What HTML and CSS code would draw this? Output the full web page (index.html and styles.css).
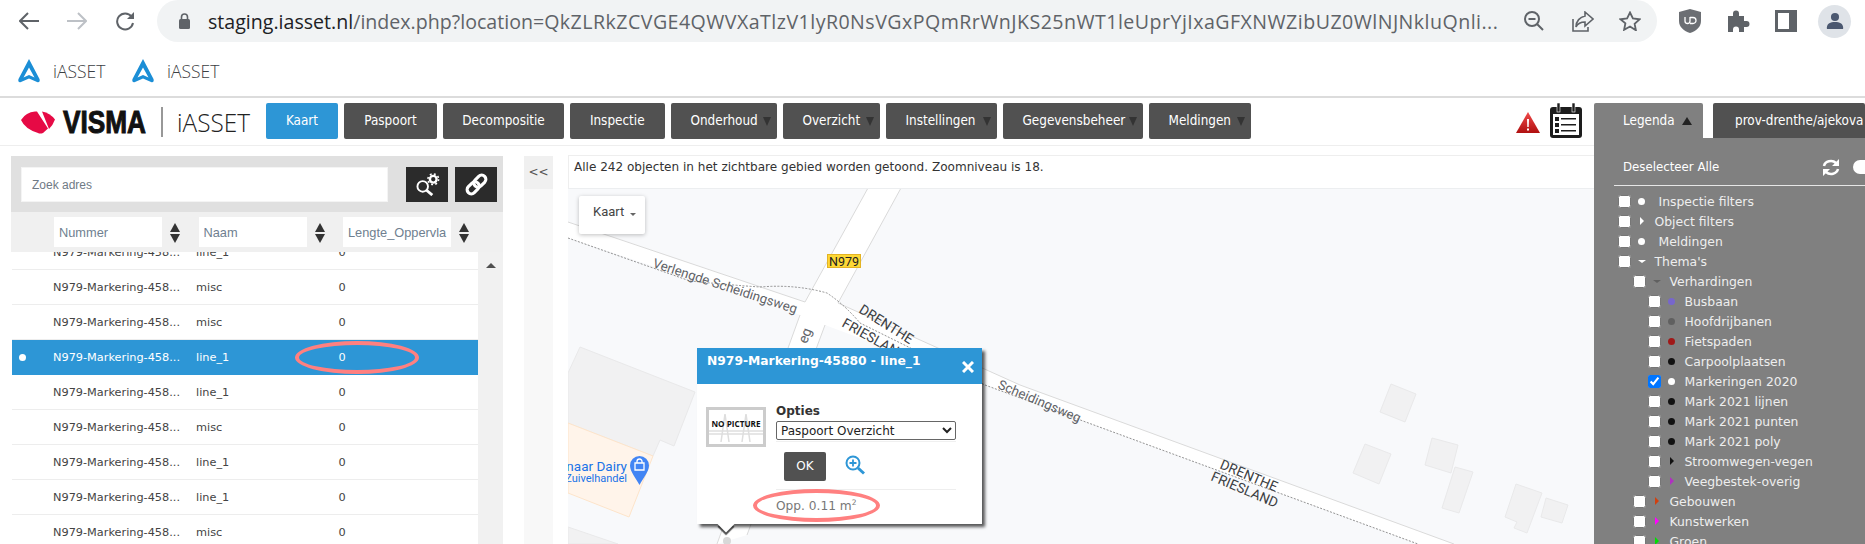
FILE: index.html
```html
<!DOCTYPE html>
<html lang="nl">
<head>
<meta charset="utf-8">
<title>iASSET</title>
<link rel="stylesheet" href="styles.css">
</head>
<body>
<div class="browser">
  <div class="toolbar">
    <svg class="tb-icon" viewBox="0 0 20 18"><path d="M9 1 1 9l8 8M1 9h19" fill="none" stroke="#5f6368" stroke-width="2"/></svg>
    <svg class="tb-icon" viewBox="0 0 20 18"><path d="m11 1 8 8-8 8M19 9H0" fill="none" stroke="#bdc1c6" stroke-width="2"/></svg>
    <svg class="tb-icon" viewBox="0 0 20 20"><path d="M16.5 5.5A8 8 0 1 0 18 12" fill="none" stroke="#5f6368" stroke-width="2"/><path d="M19 1v7h-7z" fill="#5f6368"/></svg>
    <div class="omnibox">
      <svg class="lock" viewBox="0 0 11 16"><path d="M2.5 6V4a3 3 0 0 1 6 0v2" fill="none" stroke="#5f6368" stroke-width="1.6"/><rect y="6" width="11" height="10" rx="1.5" fill="#5f6368"/></svg>
      <div class="url"><span class="host">staging.iasset.nl</span>/index.php?location=<span class="query">QkZLRkZCVGE4QWVXaTlzV1lyR0NsVGxPQmRrWnJKS25nWT1leUprYjIxaGFXNWZibUZ0WlNJNkluQnli...</span></div>
      <svg class="omni-zoom" viewBox="0 0 20 20"><circle cx="8" cy="8" r="7" fill="none" stroke="#5f6368" stroke-width="2"/><path d="M4.5 8h7M13 13l6 6" stroke="#5f6368" stroke-width="2"/></svg>
      <svg class="omni-share" viewBox="0 0 22 21"><path d="M1 8v12h15v-4" fill="none" stroke="#5f6368" stroke-width="1.6"/><path d="M13 1l8 7-8 7v-4C9 11 6 12 4 16c0-6 4-10 9-11z" fill="none" stroke="#5f6368" stroke-width="1.6"/></svg>
      <svg class="omni-star" viewBox="0 0 22 20"><path d="m11 1.500 2.900 6 6.600.8-4.900 4.500 1.300 6.500L11 15.500 5.100 18.800l1.300-6.500L1.500 8.300l6.600-.8z" fill="none" stroke="#5f6368" stroke-width="1.800"/></svg>
    </div>
    <svg class="ext ublock" viewBox="0 0 22 24"><path d="M11 0l11 3v9c0 6-5 10-11 12C5 22 0 18 0 12V3z" fill="#6b6e73"/><path d="M6 8v4a2.500 2.500 0 0 0 5 0V8M11 14.500h3a2.800 2.800 0 0 0 0-6h-3" fill="none" stroke="#fff" stroke-width="1.300"/></svg>
    <svg class="ext puzzle" viewBox="0 0 22 22"><path d="M0 6h5V3.500a3 3 0 0 1 6 0V6h5v5h2.500a3 3 0 0 1 0 6H16v5h-5v-2.500a3 3 0 0 0-6 0V22H0z" fill="#5f6368"/></svg>
    <svg class="ext panel-ic" viewBox="0 0 22 22"><rect x="1.500" y="1.500" width="19" height="19" fill="#fff" stroke="#5f6368" stroke-width="3"/><rect x="14" y="1" width="8" height="20" fill="#5f6368"/></svg>
    <div class="avatar"><svg viewBox="0 0 20 20" class="avatar-ic"><circle cx="10" cy="5.500" r="4.500" fill="#4b5870"/><path d="M1 19v-2c0-4 4-6 9-6s9 2 9 6v2z" fill="#4b5870"/></svg></div>
  </div>
  <div class="bookmarks">
    <div class="bookmark"><svg class="bm-ic" viewBox="0 0 22 24"><path d="M11 0l10.500 20q1 4-2.500 3L11 19.500 3 23q-3.500 1-2.500-3z" fill="#1b8ed6"/><path d="M11 8.500l5.500 10L11 16l-5.500 2.500z" fill="#fff"/></svg><span>iASSET</span></div>
    <div class="bookmark"><svg class="bm-ic" viewBox="0 0 22 24"><path d="M11 0l10.500 20q1 4-2.500 3L11 19.500 3 23q-3.500 1-2.500-3z" fill="#1b8ed6"/><path d="M11 8.500l5.500 10L11 16l-5.500 2.500z" fill="#fff"/></svg><span>iASSET</span></div>
  </div>
</div>

<div class="app">
  <div class="main">
    <header class="header">
      <svg class="logo" viewBox="0 0 235 32">
        <path d="M1 13Q6 5 15 4.500H17L28 21.500 23 26Q20 27 18 26 5 22 1 13z" fill="#e60a45"/>
        <path d="M22 4.500Q30 6 35 12.500 33 18 29 22z" fill="#e60a45"/>
        <text class="logo-visma" x="43" y="26" textLength="83" lengthAdjust="spacingAndGlyphs">VISMA</text>
        <rect x="141.500" y="0" width="1" height="30" fill="#333"/>
        <text class="logo-iasset" x="157" y="25" textLength="73" lengthAdjust="spacingAndGlyphs">iASSET</text>
      </svg>
      <nav class="nav">
        <div class="nav-btn active">Kaart</div>
        <div class="nav-btn">Paspoort</div>
        <div class="nav-btn">Decompositie</div>
        <div class="nav-btn">Inspectie</div>
        <div class="nav-btn drop">Onderhoud</div>
        <div class="nav-btn drop">Overzicht</div>
        <div class="nav-btn drop">Instellingen</div>
        <div class="nav-btn drop">Gegevensbeheer</div>
        <div class="nav-btn drop">Meldingen</div>
      </nav>
      <svg class="alert" viewBox="0 0 24 21"><defs><linearGradient id="ag" x1="0" y1="0" x2="0" y2="1"><stop offset="0" stop-color="#f04a4a"/><stop offset="1" stop-color="#b01010"/></linearGradient></defs><path d="M12 0l12 21H0z" fill="url(#ag)"/><path d="M11 7h2l-.3 8h-1.400zM11 16.500h2v2h-2z" fill="#fff"/></svg>
      <svg class="calendar" viewBox="0 0 32 35"><rect x="0" y="4" width="32" height="31" rx="3" fill="#1d1d1d"/><rect x="3" y="11" width="26" height="21" fill="#fff"/><rect x="7" y="0" width="3" height="9" fill="#1d1d1d" stroke="#fff" stroke-width=".6"/><rect x="22" y="0" width="3" height="9" fill="#1d1d1d" stroke="#fff" stroke-width=".6"/><path d="M5 14h4v4H5zM5 20h4v4H5zM5 26h4v4H5zM11 15h15v1.500H11zM11 21h15v1.500H11zM11 27h15v1.500H11z" fill="#1d1d1d"/></svg>
    </header>

    <div class="content">
      <section class="panel">
        <div class="search">
          <input class="search-input" type="text" placeholder="Zoek adres">
          <div class="icon-btn search-btn"><svg viewBox="0 0 26 24" class="ib-ic"><circle cx="8" cy="14" r="5.500" fill="none" stroke="#fff" stroke-width="2"/><path d="m12 18 6 5" stroke="#fff" stroke-width="3"/><circle cx="19" cy="6.500" r="3.500" fill="none" stroke="#fff" stroke-width="2.500"/><circle cx="19" cy="6.500" r="5.600" fill="none" stroke="#fff" stroke-width="1.600" stroke-dasharray="2 2.400"/></svg></div>
          <div class="icon-btn link-btn"><svg viewBox="0 0 22 22" class="ib-ic"><g transform="rotate(-45 11 11)" fill="none" stroke="#fff" stroke-width="3"><rect x="0" y="7" width="13" height="8" rx="4"/><rect x="9" y="7" width="13" height="8" rx="4"/></g></svg></div>
        </div>
        <div class="filters">
          <div class="filter"><input class="filter-input" type="text" placeholder="Nummer"><span class="sort"></span></div>
          <div class="filter"><input class="filter-input" type="text" placeholder="Naam"><span class="sort"></span></div>
          <div class="filter"><input class="filter-input" type="text" placeholder="Lengte_Oppervla"><span class="sort"></span></div>
        </div>
        <div class="table-wrap">
          <div class="rows">
            <div class="row"><span></span><span>N979-Markering-458...</span><span>line_1</span><span>0</span></div>
            <div class="row"><span></span><span>N979-Markering-458...</span><span>misc</span><span>0</span></div>
            <div class="row"><span></span><span>N979-Markering-458...</span><span>misc</span><span>0</span></div>
            <div class="row selected"><span class="sel-dot"></span><span>N979-Markering-458...</span><span>line_1</span><span>0</span><i class="oval row-oval"></i></div>
            <div class="row"><span></span><span>N979-Markering-458...</span><span>line_1</span><span>0</span></div>
            <div class="row"><span></span><span>N979-Markering-458...</span><span>misc</span><span>0</span></div>
            <div class="row"><span></span><span>N979-Markering-458...</span><span>line_1</span><span>0</span></div>
            <div class="row"><span></span><span>N979-Markering-458...</span><span>line_1</span><span>0</span></div>
            <div class="row"><span></span><span>N979-Markering-458...</span><span>misc</span><span>0</span></div>
          </div>
          <div class="scrollbar"><span class="scroll-up"></span></div>
        </div>
      </section>

      <div class="collapse"><div class="collapse-btn">&lt;&lt;</div></div>

      <section class="map-col">
        <div class="map-info">Alle 242 objecten in het zichtbare gebied worden getoond. Zoomniveau is 18.</div>
        <div class="map">
          <svg class="map-svg" viewBox="568 188 1026 356">
            <g class="bld">
              <path d="M580 347 695 392 674 446 660 440 653 456 568 423V373z"/>
              <path d="M568 527 618 544H568z"/>
              <path d="M1391 384 1416 394 1405 422 1380 412z"/>
              <path d="M1365 444 1391 454 1379 484 1353 473z"/>
              <path d="M1432 438 1458 445 1451 473 1425 465z"/>
              <path d="M1455 467 1473 472 1459 513 1442 508z"/>
              <path d="M1516 484 1542 493 1527 533 1514 528 1517 522 1505 517z"/>
              <path d="M1546 498 1568 505 1562 523 1541 517z"/>
            </g>
            <path class="shop" d="M568 423 653 456 629 517 568 493z"/>
            <path class="road-fill" d="M568 222 805 302 868 188H901L838 303 1020 385 1454 544H1418L985 385 825 325 747 535 717 544 800 315 795 313 568 238z"/>
            <path class="road-edge" d="M568 222 805 302 868 188M901 188 838 303 1020 385 1454 544M825 325 747 535M717 544 800 315"/>
            <path class="boundary" d="M568 238 690 281Q730 285 760 287 795 284 827 293 845 305 860 323L985 385 1418 544"/>
            <g class="label">
              <text transform="translate(652 267) rotate(18)">Verlengde Scheidingsweg</text>
              <text transform="translate(997 388) rotate(23)">Scheidingsweg</text>
              <text class="label-eg" transform="translate(812 330) rotate(-70)" text-anchor="end">eg</text>
            </g>
            <g class="label-dark">
              <text transform="translate(858 312) rotate(32)">DRENTHE</text>
              <text transform="translate(841 326) rotate(29)">FRIESLAND</text>
              <text transform="translate(1219 468) rotate(23)">DRENTHE</text>
              <text transform="translate(1210 480) rotate(23)">FRIESLAND</text>
            </g>
            <rect class="shield" x="827.500" y="254.500" width="33" height="13"/>
            <text class="shield-text" x="844" y="265.500" text-anchor="middle">N979</text>
            <text class="poi-name" x="627" y="471" text-anchor="end">naar Dairy</text>
            <text class="poi-sub" x="627" y="482" text-anchor="end">Zuivelhandel</text>
            <path class="poi-pin" d="M639.500 456a9.500 9.500 0 0 1 9.500 9.500c0 6-6 13-9.500 19.500-3.500-6.500-9.500-13.500-9.500-19.500a9.500 9.500 0 0 1 9.500-9.500z"/>
            <path class="poi-bag" d="M635 463h9v7h-9zM637 463v-1.500a2.500 2.500 0 0 1 5 0V463"/>
            <circle cx="727" cy="541" r="4" class="marker-dot"/>
          </svg>
          <div class="map-type">Kaart <span class="caret"></span></div>
          <div class="popup">
            <div class="popup-head"><span>N979-Markering-45880 - line_1</span><svg class="popup-x" viewBox="0 0 12 12"><path d="m1 1 10 10M11 1 1 11" stroke="#fff" stroke-width="3"/></svg></div>
            <div class="popup-body">
              <svg class="nopic" viewBox="0 0 54 34">
                <path d="M0 21h54M0 24h54M16 4 12 32M16 4l4 28M37 4l-4 28M37 4l4 28" stroke="#dedede" stroke-width="1.500" fill="none"/>
                <text class="nopic-text" x="27" y="17" text-anchor="middle" textLength="49" lengthAdjust="spacingAndGlyphs">NO PICTURE</text>
              </svg>
              <div class="popup-form">
                <div class="opties">Opties</div>
                <div class="select-wrap"><select class="select"><option>Paspoort Overzicht</option></select></div>
                <div class="actions">
                  <div class="ok">OK</div>
                  <svg class="zoom-in" viewBox="0 0 20 20"><circle cx="8" cy="8" r="6.500" fill="none" stroke="#2d96d6" stroke-width="2"/><path d="M4.500 8h7M8 4.500v7" stroke="#2d96d6" stroke-width="1.800"/><path d="m13 13 6 5.500" stroke="#2d96d6" stroke-width="3"/></svg>
                </div>
              </div>
            </div>
            <div class="popup-foot"><div class="opp">Opp. 0.11 m<sup>2</sup></div></div>
            <i class="oval opp-oval"></i>
            <i class="popup-tail"></i>
          </div>
        </div>
      </section>
    </div>
  </div>

  <aside class="right">
    <div class="tabs">
      <div class="tab tab-legend">Legenda <span class="tab-arrow"></span></div>
      <div class="tab tab-user">prov-drenthe/ajekova</div>
    </div>
    <div class="legend">
      <div class="legend-top">
        <span class="deselect">Deselecteer Alle</span>
        <svg class="refresh" viewBox="0 0 18 17"><path d="M2 7a7 6 0 0 1 12-3M16 10a7 6 0 0 1-12 3" fill="none" stroke="#fff" stroke-width="2.500"/><path d="M17 0v7h-7zM1 17v-7h7z" fill="#fff"/></svg>
        <span class="toggle"></span>
      </div>
      <div class="tree">
        <label class="item l0"><input type="checkbox"><i class="mk"><b class="dot c-white"></b></i><span class="txt pad">Inspectie filters</span></label>
        <label class="item l0"><input type="checkbox"><i class="mk"><b class="tri-r c-white"></b></i><span class="txt">Object filters</span></label>
        <label class="item l0"><input type="checkbox"><i class="mk"><b class="dot c-white"></b></i><span class="txt pad">Meldingen</span></label>
        <label class="item l0"><input type="checkbox"><i class="mk"><b class="tri-d c-white"></b></i><span class="txt">Thema's</span></label>
        <label class="item l1"><input type="checkbox"><i class="mk"><b class="tri-d c-grey"></b></i><span class="txt">Verhardingen</span></label>
        <label class="item l2"><input type="checkbox"><i class="mk"><b class="dot c-purple"></b></i><span class="txt">Busbaan</span></label>
        <label class="item l2"><input type="checkbox"><i class="mk"><b class="dot c-grey"></b></i><span class="txt">Hoofdrijbanen</span></label>
        <label class="item l2"><input type="checkbox"><i class="mk"><b class="dot c-red"></b></i><span class="txt">Fietspaden</span></label>
        <label class="item l2"><input type="checkbox"><i class="mk"><b class="dot c-black"></b></i><span class="txt">Carpoolplaatsen</span></label>
        <label class="item l2"><input type="checkbox" checked><i class="mk"><b class="dot c-white"></b></i><span class="txt">Markeringen 2020</span></label>
        <label class="item l2"><input type="checkbox"><i class="mk"><b class="dot c-black"></b></i><span class="txt">Mark 2021 lijnen</span></label>
        <label class="item l2"><input type="checkbox"><i class="mk"><b class="dot c-black"></b></i><span class="txt">Mark 2021 punten</span></label>
        <label class="item l2"><input type="checkbox"><i class="mk"><b class="dot c-black"></b></i><span class="txt">Mark 2021 poly</span></label>
        <label class="item l2"><input type="checkbox"><i class="mk"><b class="tri-r c-black"></b></i><span class="txt">Stroomwegen-vegen</span></label>
        <label class="item l2"><input type="checkbox"><i class="mk"><b class="tri-r c-violet"></b></i><span class="txt">Veegbestek-overig</span></label>
        <label class="item l1"><input type="checkbox"><i class="mk"><b class="tri-r c-orange"></b></i><span class="txt">Gebouwen</span></label>
        <label class="item l1"><input type="checkbox"><i class="mk"><b class="tri-r c-magenta"></b></i><span class="txt">Kunstwerken</span></label>
        <label class="item l1"><input type="checkbox"><i class="mk"><b class="tri-r c-green"></b></i><span class="txt">Groen</span></label>
      </div>
    </div>
  </aside>
</div>
</body>
</html>
```
FILE: styles.css
```css
* { box-sizing: border-box; }
html, body { margin: 0; height: 544px; overflow: hidden; background: #fff; }
body { width: 1865px; font-family: "DejaVu Sans", sans-serif; }

/* browser chrome */
.browser { height: 98px; border-bottom: 2px solid #dcdcdc; }
.toolbar { height: 42px; display: flex; align-items: center; padding-left: 19px; }
.tb-icon { width: 20px; height: 20px; margin-right: 28px; flex: none; }
.tb-icon:nth-child(3) { margin-right: 22px; }
.omnibox { width: 1500px; height: 42px; flex: none; border-radius: 21px; background: #f1f3f4; display: flex; align-items: center; padding-left: 22px; }
.lock { width: 11px; height: 16px; flex: none; }
.url { width: 1290px; flex: none; margin-left: 18px; white-space: nowrap; overflow: hidden; font: 19.6px "Open Sans", sans-serif; color: #5f6368; }
.host { color: #202124; }
.query { letter-spacing: .46px; }
.omni-zoom { width: 20px; height: 20px; margin-left: 26px; flex: none; }
.omni-share { width: 22px; height: 21px; margin-left: 28px; flex: none; }
.omni-star { width: 22px; height: 20px; margin-left: 25px; flex: none; }
.ext { flex: none; width: 22px; height: 22px; }
.ublock { height: 24px; margin-left: 22px; }
.puzzle { margin-left: 26.5px; }
.panel-ic { margin-left: 25.5px; }
.avatar { flex: none; width: 33px; height: 33px; margin-left: 21px; border-radius: 50%; background: #dfe3e8; display: flex; align-items: center; justify-content: center; }
.avatar-ic { width: 18px; height: 18px; }
.bookmarks { height: 54px; display: flex; align-items: center; padding: 3px 0 0 18px; gap: 12px; }
.bookmark { display: flex; align-items: center; gap: 13px; width: 102px; font: 300 17.5px "Open Sans", sans-serif; color: #3c4043; }
.bm-ic { width: 22px; height: 24px; flex: none; }

/* app grid */
.app { display: grid; grid-template-columns: 1594px 271px; height: 446px; }
.main { display: flex; flex-direction: column; min-width: 0; }
.header { height: 48px; flex: none; border-bottom: 1px solid #eee; display: flex; align-items: flex-start; padding-top: 5px; position: relative; }
.logo { width: 235px; height: 32px; margin: 4px 0 0 20px; flex: none; }
.logo-visma { font: 900 31px "Liberation Sans", sans-serif; fill: #111; stroke: #111; stroke-width: 1; }
.logo-iasset { font: 300 26px "Open Sans", sans-serif; fill: #222; }
.nav { display: grid; grid-template-columns: 72px 93px 121px 94.5px 106px 97px 111px 140px 102px; gap: 6px; margin-left: 11px; flex: none; }
.nav-btn { height: 36px; border-radius: 2px; background: #515151; color: #fff; font: 13.4px/36px "DejaVu Sans Condensed", "DejaVu Sans", sans-serif; text-align: center; position: relative; }
.nav-btn.active { background: #2d96d6; }
.nav-btn.drop { text-align: left; padding-left: 20px; }
.nav-btn.drop::after { content: ""; position: absolute; right: 6px; top: 14px; border-style: solid; border-width: 9px 4.5px 0; border-color: #333 transparent transparent; }
.alert { width: 24px; height: 21px; margin: 9px 0 0 265px; flex: none; }
.calendar { width: 32px; height: 35px; margin-left: 10.5px; flex: none; }

/* content */
.content { flex: 1; min-height: 0; display: flex; padding: 10px 0 0 11px; overflow: hidden; }
.panel { width: 492px; flex: none; display: flex; flex-direction: column; }
.search { height: 56px; flex: none; background: #e0e0e0; display: flex; padding: 11px 6px 0 10px; }
.search-input { width: 367px; height: 35px; border: 1px solid #f4f4f4; background: #fff; padding: 0 10px; font: 12px "Liberation Sans", sans-serif; outline: 0; }
.search-input::placeholder { color: #6f7a85; opacity: 1; }
.icon-btn { width: 42px; height: 35px; background: #2b2b2b; display: flex; align-items: center; justify-content: center; }
.search-btn { margin-left: 18px; }
.link-btn { margin-left: 7px; }
.ib-ic { width: 25px; height: 23px; }
.filters { height: 40px; flex: none; background: #f0f0f0; display: flex; padding: 5px 0 0 43px; }
.filter { display: flex; width: 144.5px; flex: none; }
.filter-input { width: 108px; height: 30px; border: 0; background: #fff; padding: 0 0 0 5px; font: 12.8px "Liberation Sans", sans-serif; outline: 0; }
.filter-input::placeholder { color: #6f7f90; opacity: 1; }
.sort { width: 10px; height: 20px; margin: 6px 0 0 8px; position: relative; }
.sort::before, .sort::after { content: ""; position: absolute; left: 0; border-style: solid; border-color: transparent; }
.sort::before { top: 0; border-width: 0 5px 9px; border-bottom-color: #333; }
.sort::after { bottom: 0; border-width: 9px 5px 0; border-top-color: #333; }
.table-wrap { flex: 1; min-height: 0; display: flex; overflow: hidden; padding-left: 1px; }
.rows { flex: 1; margin-top: -17px; }
.row { height: 35px; border-bottom: 1px solid #ededed; display: grid; grid-template-columns: 41px 143px 142.5px 1fr; align-items: center; font-size: 11.3px; color: #444; position: relative; white-space: nowrap; }
.row.selected { background: #2d96d6; color: #fff; border-bottom-color: #2d96d6; }
.sel-dot { width: 7px; height: 7px; border-radius: 50%; background: #fff; margin-left: 7px; }
.scrollbar { width: 25px; flex: none; background: #f1f1f1; padding: 11px 0 0 8px; }
.scroll-up { display: block; width: 0; border-style: solid; border-width: 0 5px 5px; border-color: transparent transparent #505050; }
.oval { position: absolute; display: block; border: 4px solid #ff8080; border-radius: 50%; }
.row-oval { left: 283px; top: 1px; width: 124px; height: 33px; }

.collapse { width: 29px; margin-left: 21px; flex: none; background: #f8f8f8; }
.collapse-btn { height: 33px; background: #f0f0f0; text-align: center; font: 12px/32px "DejaVu Sans", sans-serif; color: #555; }

.map-col { width: 1026px; margin: -1px 0 0 15px; flex: none; display: flex; flex-direction: column; }
.map-info { height: 33px; flex: none; border-top: 1px solid #eee; border-left: 1px solid #eee; padding: 4px 0 0 5px; font-size: 12.05px; line-height: 14px; color: #333; }
.map { flex: 1; min-height: 0; position: relative; background: #f8f9fb; border-top: 1px solid #eceef0; overflow: hidden; }
.map-svg { position: absolute; left: 0; top: -1px; width: 1026px; height: 356px; }
.bld path { fill: #f1f1f2; stroke: #e9e9ea; }
.shop { fill: #fff4ea; stroke: #fde4ca; }
.road-fill { fill: #fff; }
.road-edge { fill: none; stroke: #dadada; stroke-width: 1; }
.boundary { fill: none; stroke: #777; stroke-width: .8; stroke-dasharray: 2 1.500; }
.label text { font: 13.2px Roboto, sans-serif; fill: #5f6368; }
.label .label-eg { font-size: 14px; }
.label-dark text { font: 400 13.8px Roboto, sans-serif; fill: #3c4043; }
.shield { fill: #fdd835; stroke: #e3b324; }
.shield-text { font: 12.5px Roboto, sans-serif; fill: #222; }
.poi-name { font: 13.5px Roboto, sans-serif; fill: #1a73e8; }
.poi-sub { font: 11px Roboto, sans-serif; fill: #1a73e8; }
.poi-pin { fill: #4285f4; }
.poi-bag { fill: none; stroke: #fff; stroke-width: 1.3; }
.marker-dot { fill: #d8d8d8; }
.map-type { position: absolute; left: 11px; top: 7px; width: 66px; height: 38px; background: #fff; border-radius: 2px; box-shadow: 0 1px 4px rgba(0,0,0,.25); padding-left: 14px; font: 13px/32px Roboto, sans-serif; color: #444; }
.caret { display: inline-block; vertical-align: 0; margin-left: 2px; border-style: solid; border-width: 3.5px 3.5px 0; border-color: #666 transparent transparent; }

/* popup */
.popup { position: absolute; left: 129px; top: 159px; width: 285px; height: 176px; background: #fff; box-shadow: 3px 3px 3px rgba(0,0,0,.65); }
.popup-head { height: 36px; background: #2d96d6; color: #fff; font-weight: 700; font-size: 12.3px; padding: 6px 0 0 10px; line-height: 14px; position: relative; }
.popup-x { position: absolute; right: 8px; top: 13px; width: 12px; height: 12px; }
.popup-body { display: flex; padding: 20px 0 0 9px; }
.nopic { width: 60px; height: 40px; margin-top: 3px; border: 3px solid #ccc; background: #fff; flex: none; }
.nopic-text { font: 700 8px "Open Sans", sans-serif; fill: #111; }
.popup-form { width: 180px; margin-left: 10px; flex: none; }
.opties { font-weight: 700; font-size: 12px; line-height: 14px; color: #333; margin-bottom: 3px; }
.select-wrap { height: 21px; border-bottom: 1px solid #f0f0f0; }
.select { display: block; width: 180px; height: 19px; font: 12px "DejaVu Sans", sans-serif; color: #222; background: #fff; border: 1px solid #666; border-radius: 2px; padding: 0; }
.actions { display: flex; margin: 10px 0 0 8px; }
.ok { width: 42px; height: 29px; border-radius: 2px; background: #515151; color: #fff; text-align: center; font: 12px/29px "DejaVu Sans", sans-serif; }
.zoom-in { width: 20px; height: 20px; margin: 3px 0 0 19px; }
.popup-foot { margin: 8px 0 0 79px; width: 180px; border-top: 1px solid #eee; }
.opp { font-size: 12.2px; line-height: 16px; color: #777; margin-top: 8px; }
.opp sup { font-size: 7.5px; line-height: 0; }
.opp-oval { left: 56px; top: 141px; width: 127px; height: 33px; }
.popup-tail { position: absolute; left: 23px; bottom: -6px; width: 12px; height: 12px; transform: rotate(45deg); background: #fff; box-shadow: 2px 2px 1px rgba(0,0,0,.7); }

/* legend */
.right { display: flex; flex-direction: column; padding-top: 5px; min-width: 0; overflow: hidden; }
.tabs { height: 35px; flex: none; display: flex; gap: 10px; }
.tab { font: 13.4px/35px "DejaVu Sans Condensed", "DejaVu Sans", sans-serif; color: #fff; border-radius: 2px 2px 0 0; white-space: nowrap; }
.tab-legend { width: 109px; background: #808080; padding-left: 29px; }
.tab-arrow { display: inline-block; margin-left: 4px; border-style: solid; border-width: 0 5px 8px; border-color: transparent transparent #222; }
.tab-user { flex: 1; background: #515151; padding-left: 22px; overflow: hidden; }
.legend { flex: 1; min-height: 0; background: #808080; color: #eee; padding: 0 0 0 20px; overflow: hidden; }
.legend-top { height: 48px; margin-bottom: 5px; border-bottom: 1.5px solid #e6e6e6; display: flex; align-items: flex-start; padding: 21px 0 0 9px; position: relative; }
.deselect { font: 13.1px/16px "DejaVu Sans Condensed", "DejaVu Sans", sans-serif; color: #fff; width: 199px; flex: none; }
.refresh { width: 18px; height: 17px; flex: none; }
.toggle { width: 18px; height: 14px; margin: 1px 0 0 13px; background: #fff; border-radius: 7px; flex: none; }
.tree { display: flex; flex-direction: column; margin-left: -16px; }
.item { height: 20px; display: flex; align-items: center; font-size: 12.4px; color: #eee; }
.item input { width: 13px; height: 13px; margin: 0; flex: none; }
.l0 { padding-left: 20px; }
.l1 { padding-left: 35px; }
.l2 { padding-left: 50px; }
.mk { width: 21.5px; height: 20px; margin-right: 2px; display: flex; align-items: center; justify-content: center; flex: none; }
.txt { white-space: nowrap; }
.pad { padding-left: 4px; }
.dot { width: 7px; height: 7px; border-radius: 50%; background: currentColor; }
.tri-r { width: 0; border-style: solid; border-width: 4px 0 4px 4px; border-color: transparent transparent transparent currentColor; }
.tri-d { width: 0; border-style: solid; border-width: 3px 4px 0; border-color: currentColor transparent transparent; }
.c-white { color: #fff; }
.c-grey { color: #606060; }
.c-purple { color: #7766cc; }
.c-red { color: #a01818; }
.c-black { color: #111; }
.c-violet { color: #b030c0; }
.c-orange { color: #d04010; }
.c-magenta { color: #ff00ff; }
.c-green { color: #00e000; }
```
